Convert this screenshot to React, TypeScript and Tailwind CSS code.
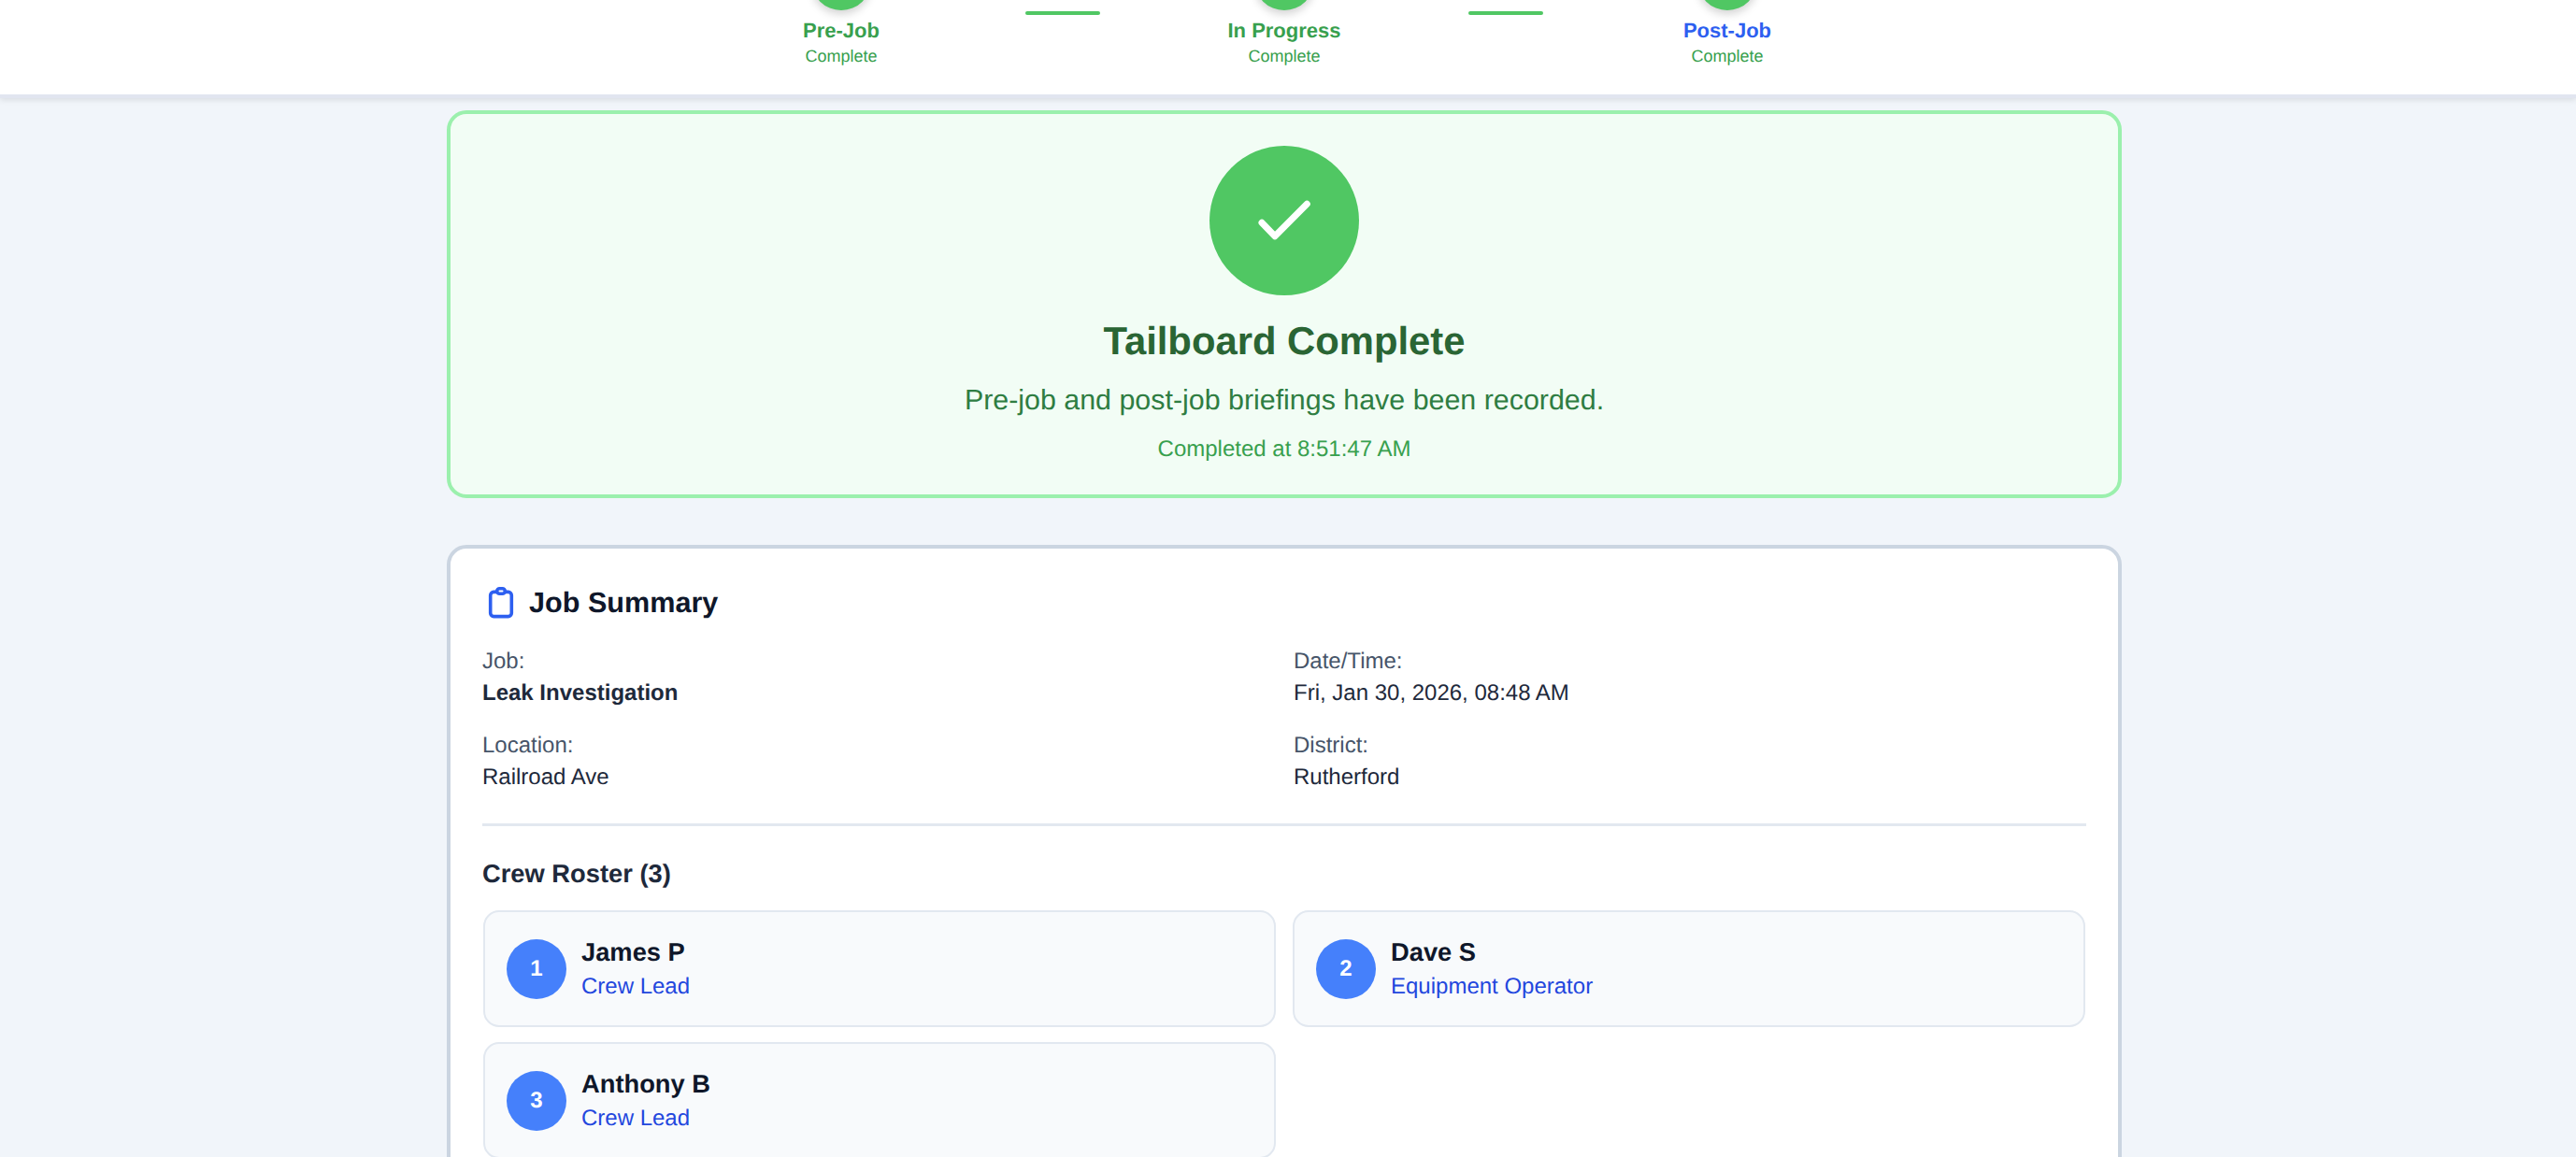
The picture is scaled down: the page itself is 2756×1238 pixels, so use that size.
import React from 'react';

const font = 'font-["Liberation_Sans",Arial,sans-serif] [text-rendering:geometricPrecision]';

const CheckMark = () => (
  <svg width="80" height="80" viewBox="40 40 80 80" fill="none" className="text-white">
    <path d="M56 82.3 L70 96.7 L104.3 62.3" stroke="currentColor" strokeWidth="7" strokeLinecap="round" strokeLinejoin="round" />
  </svg>
);

const ClipboardIcon = () => (
  <svg width="39" height="40" viewBox="7 5 39 40" fill="none" className="text-[#2d5ff0] shrink-0">
    <rect x="14.7" y="13.4" width="22.6" height="26.2" rx="3.5" stroke="currentColor" strokeWidth="3.6" />
    <rect x="21.7" y="9.7" width="8.6" height="5.6" rx="2.8" fill="#fff" stroke="currentColor" strokeWidth="3.6" />
  </svg>
);

const Step = ({ label, labelClass }: { label: string; labelClass: string }) => (
  <div className="w-[170px] flex flex-col items-center shrink-0">
    <div className="w-16 h-16 -mt-[53px] rounded-full bg-[#50c763] shadow-[0_4px_10px_rgba(0,0,0,0.18)]" />
    <div className={`mt-2 text-[22px] leading-7 font-bold ${labelClass}`}>{label}</div>
    <div className="mt-px text-[18px] leading-6 text-[#38a04e]">Complete</div>
  </div>
);

const Connector = () => <div className="w-20 h-1 mt-3 rounded-sm bg-[#50c763] shrink-0" />;

const Field = ({ label, value, bold }: { label: string; value: string; bold?: boolean }) => (
  <div>
    <div className="text-2xl leading-[34px] text-[#475569]">{label}</div>
    <div className={`text-2xl leading-[34px] text-[#1e293b] ${bold ? 'font-bold' : ''}`}>{value}</div>
  </div>
);

const CrewCard = ({ n, name, role }: { n: number; name: string; role: string }) => (
  <div className="h-[125px] px-[23px] flex items-center gap-4 rounded-[17px] border-2 border-[#e2e8f0] bg-[#f8fafc]">
    <div className="w-16 h-16 rounded-full bg-[#4580fb] flex items-center justify-center text-2xl font-bold text-white shrink-0">
      {n}
    </div>
    <div>
      <div className="text-[27.3px] leading-[37px] font-bold text-[#0f172a]">{name}</div>
      <div className="mt-0.5 text-2xl leading-[34px] text-[#2347de]">{role}</div>
    </div>
  </div>
);

export default function App() {
  return (
    <div className={`h-[1238px] overflow-hidden bg-[#f1f5fa] ${font}`}>
      <header className="h-[105px] pr-2 bg-white border-b-4 border-[#e1e5f0] shadow-[0_2px_6px_rgba(0,0,0,0.1)] flex justify-center items-start gap-[112px]">
        <Step label="Pre-Job" labelClass="text-[#38a04e]" />
        <Connector />
        <Step label="In Progress" labelClass="text-[#38a04e]" />
        <Connector />
        <Step label="Post-Job" labelClass="text-[#2d5ff0]" />
      </header>

      <main className="w-[1792px] ml-[478px] pt-[13px]">
        <section className="h-[415px] pt-[34px] rounded-[21px] border-4 border-[#9bf0ad] bg-[#f2fdf5] flex flex-col items-center">
          <div className="w-40 h-40 rounded-full bg-[#50c763] flex items-center justify-center">
            <CheckMark />
          </div>
          <h1 className="mt-[25px] text-[41.8px] leading-[48px] font-bold text-[#2a6534]">Tailboard Complete</h1>
          <p className="mt-[19px] text-[30.4px] leading-10 text-[#2f7d42]">Pre-job and post-job briefings have been recorded.</p>
          <p className="mt-[19px] text-2xl leading-[28px] text-[#38a04e]">Completed at 8:51:47 AM</p>
        </section>

        <section className="mt-[50px] h-[800px] px-[34px] pt-[38px] rounded-[21px] border-4 border-[#cbd5e1] bg-white">
          <div className="flex items-center gap-[10px] h-10 ml-px">
            <ClipboardIcon />
            <h2 className="text-[30.6px] leading-10 font-bold text-[#0f172a]">Job Summary</h2>
          </div>
          <div className="mt-[26px] grid grid-cols-2 gap-x-5 gap-y-[22px]">
            <Field label="Job:" value="Leak Investigation" bold />
            <Field label="Date/Time:" value="Fri, Jan 30, 2026, 08:48 AM" />
            <Field label="Location:" value="Railroad Ave" />
            <Field label="District:" value="Rutherford" />
          </div>
          <div className="mt-8 h-[3px] bg-[#e2e8f0]" />
          <h3 className="mt-[33px] text-[27.3px] leading-9 font-bold text-[#1e293b]">Crew Roster (3)</h3>
          <div className="mt-[21px] mx-px grid grid-cols-2 gap-x-[18px] gap-y-4">
            <CrewCard n={1} name="James P" role="Crew Lead" />
            <CrewCard n={2} name="Dave S" role="Equipment Operator" />
            <CrewCard n={3} name="Anthony B" role="Crew Lead" />
          </div>
        </section>
      </main>
    </div>
  );
}
